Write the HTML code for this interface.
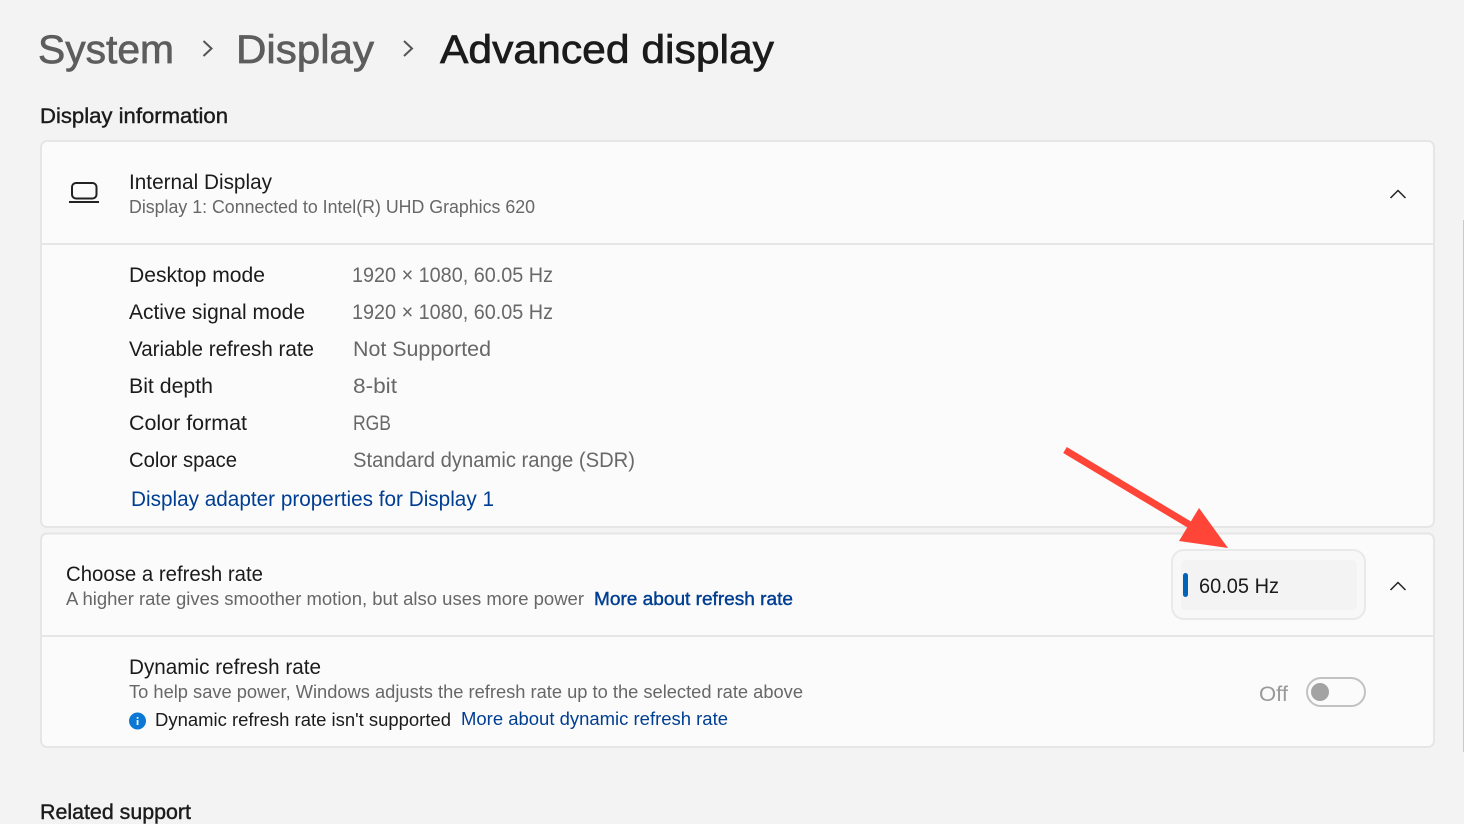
<!DOCTYPE html>
<html lang="en">
<head>
<meta charset="utf-8">
<title>Advanced display</title>
<style>
html,body{margin:0;padding:0;width:1464px;height:824px;overflow:hidden;background:#f3f3f3}
svg{display:block}
text{font-family:"Liberation Sans",sans-serif;font-size:21px;fill:#1b1b1b}
.s{font-size:18px;fill:#676767}
.v{fill:#686868}
.t{font-size:40px;fill:#5d5d5d;stroke:#5d5d5d;stroke-width:.7}
.h{stroke:#1b1b1b;stroke-width:.4}
.l{fill:#003e92}
</style>
</head>
<body>
<svg width="1464" height="824" viewBox="0 0 1464 824" xmlns="http://www.w3.org/2000/svg">
<rect width="1464" height="824" fill="#f3f3f3"/>
<rect x="1463" y="220" width="1" height="532" fill="#c9c9c9"/>

<text class="t" x="38" y="63" textLength="136" lengthAdjust="spacingAndGlyphs">System</text>
<path d="M203.500 41l8 7.500-8 7.500" fill="none" stroke="#555" stroke-width="2"/>
<text class="t" x="236" y="63" textLength="138" lengthAdjust="spacingAndGlyphs">Display</text>
<path d="M404 41l8 7.500-8 7.500" fill="none" stroke="#555" stroke-width="2"/>
<text class="t" x="440" y="63" textLength="334" lengthAdjust="spacingAndGlyphs" style="fill:#1b1b1b;stroke:#1b1b1b">Advanced display</text>

<text class="h" x="40" y="123" textLength="188" lengthAdjust="spacingAndGlyphs">Display information</text>

<rect x="41" y="141" width="1393" height="386" rx="6" fill="#fbfbfb" stroke="#e6e6e6" stroke-width="2"/>
<rect x="41" y="243" width="1393" height="2" fill="#e6e6e6"/>

<rect x="72" y="183" width="24.500" height="15.500" rx="4" fill="none" stroke="#222" stroke-width="2"/>
<rect x="69" y="201" width="30" height="2" fill="#222"/>

<text x="129" y="189" textLength="143" lengthAdjust="spacingAndGlyphs">Internal Display</text>
<text class="s" x="129" y="213" textLength="406" lengthAdjust="spacingAndGlyphs">Display 1: Connected to Intel(R) UHD Graphics 620</text>
<path d="M1390.500 198l7.500-7.500 7.500 7.500" fill="none" stroke="#222" stroke-width="1.500"/>

<text x="129" y="282" textLength="136" lengthAdjust="spacingAndGlyphs">Desktop mode</text>
<text class="v" x="352" y="282" textLength="201" lengthAdjust="spacingAndGlyphs">1920 × 1080, 60.05 Hz</text>
<text x="129" y="319" textLength="176" lengthAdjust="spacingAndGlyphs">Active signal mode</text>
<text class="v" x="352" y="319" textLength="201" lengthAdjust="spacingAndGlyphs">1920 × 1080, 60.05 Hz</text>
<text x="129" y="356" textLength="185" lengthAdjust="spacingAndGlyphs">Variable refresh rate</text>
<text class="v" x="353" y="356" textLength="138" lengthAdjust="spacingAndGlyphs">Not Supported</text>
<text x="129" y="393" textLength="84" lengthAdjust="spacingAndGlyphs">Bit depth</text>
<text class="v" x="353" y="393" textLength="44" lengthAdjust="spacingAndGlyphs">8-bit</text>
<text x="129" y="430" textLength="118" lengthAdjust="spacingAndGlyphs">Color format</text>
<text class="v" x="353" y="430" textLength="38" lengthAdjust="spacingAndGlyphs">RGB</text>
<text x="129" y="467" textLength="108" lengthAdjust="spacingAndGlyphs">Color space</text>
<text class="v" x="353" y="467" textLength="282" lengthAdjust="spacingAndGlyphs">Standard dynamic range (SDR)</text>
<text class="l" x="131" y="506" textLength="363" lengthAdjust="spacingAndGlyphs">Display adapter properties for Display 1</text>

<rect x="41" y="533.500" width="1393" height="213.500" rx="6" fill="#fbfbfb" stroke="#e6e6e6" stroke-width="2"/>
<rect x="41" y="635" width="1393" height="2" fill="#e6e6e6"/>

<text x="66" y="581" textLength="197" lengthAdjust="spacingAndGlyphs">Choose a refresh rate</text>
<text class="s" x="66" y="605" textLength="518" lengthAdjust="spacingAndGlyphs">A higher rate gives smoother motion, but also uses more power</text>
<text class="s l" x="594" y="605" textLength="199" lengthAdjust="spacingAndGlyphs" style="fill:#003e92;stroke:#003e92;stroke-width:.4">More about refresh rate</text>

<rect x="1172" y="550" width="193" height="69" rx="12" fill="#f8f8f8" stroke="#e9e9e9" stroke-width="2"/>
<rect x="1181" y="560" width="176" height="50" rx="5" fill="#f3f3f3"/>
<rect x="1183" y="573" width="5" height="24" rx="2.500" fill="#0063b8"/>
<text x="1199" y="593" textLength="80" lengthAdjust="spacingAndGlyphs">60.05 Hz</text>
<path d="M1390.500 590l7.500-7.500 7.500 7.500" fill="none" stroke="#222" stroke-width="1.500"/>

<text x="129" y="674" textLength="192" lengthAdjust="spacingAndGlyphs">Dynamic refresh rate</text>
<text class="s" x="129" y="698" textLength="674" lengthAdjust="spacingAndGlyphs">To help save power, Windows adjusts the refresh rate up to the selected rate above</text>
<circle cx="137.500" cy="721" r="8.500" fill="#0a78d4"/>
<rect x="136.700" y="720" width="1.700" height="5" fill="#fff"/>
<rect x="136.700" y="717" width="1.700" height="1.700" fill="#fff"/>
<text x="155" y="726" textLength="296" lengthAdjust="spacingAndGlyphs" style="font-size:18px">Dynamic refresh rate isn't supported</text>
<text class="s" x="461" y="725" textLength="267" lengthAdjust="spacingAndGlyphs" style="fill:#003e92">More about dynamic refresh rate</text>

<text x="1259" y="701" textLength="29" lengthAdjust="spacingAndGlyphs" style="fill:#9a9a9a">Off</text>
<rect x="1307" y="678" width="58" height="28" rx="14" fill="#fbfbfb" stroke="#c2c2c2" stroke-width="2"/>
<circle cx="1320" cy="692" r="9" fill="#a3a3a3"/>

<text class="h" x="40" y="819" textLength="151" lengthAdjust="spacingAndGlyphs">Related support</text>

<path d="M1065 450L1190 525" stroke="#ff4438" stroke-width="7" fill="none"/>
<polygon points="1199,508 1228,548 1179,541" fill="#ff4438"/>
</svg>
</body>
</html>
